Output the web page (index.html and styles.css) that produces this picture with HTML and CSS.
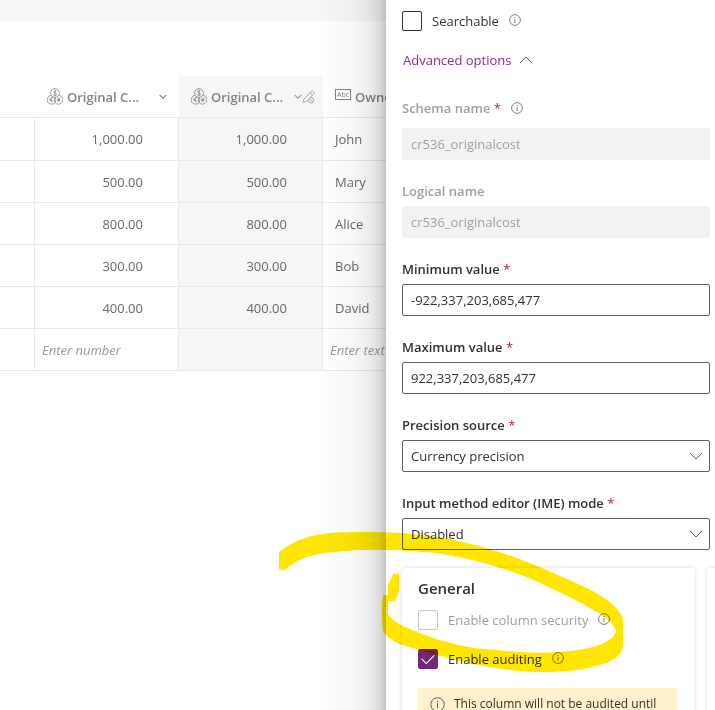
FILE: index.html
```html
<!DOCTYPE html>
<html lang="en">
<head>
<meta charset="utf-8">
<title>Edit column</title>
<link rel="stylesheet" href="styles.css">
</head>
<body>
<svg class="symbols" aria-hidden="true">
  <symbol id="info" viewBox="0 0 12 12"><circle cx="6" cy="6" r="5.4"/><path d="M6 5v4M6 3v1"/></symbol>
  <symbol id="down" viewBox="0 0 14 8"><path d="M1 1l6 6 6-6"/></symbol>
  <symbol id="up" viewBox="0 0 14 8"><path d="M1 7l6-6 6 6"/></symbol>
  <symbol id="currency" viewBox="0 0 16 17">
    <circle cx="8" cy="5" r="4.4"/>
    <path d="M3.8 7.4A4.4 4.4 0 1 0 8 14.4A4.4 4.4 0 1 0 12.2 7.4M8 9.4a4.4 4.4 0 0 1 0 5M8 9.4a4.4 4.4 0 0 0 0 5"/>
    <path d="M9.7 3.3C9 2.6 6.7 2.5 6.7 3.8S9.6 5 9.6 6.3 7 7.500 6.300 6.600M8 1.800v6.400"/>
    <path d="M6 9.800C4.500 9 3.200 10 3.200 11.500S4.700 14 6 13.200M2.400 11h2.800M2.400 12.300h2.600"/>
    <path d="M10.300 9.500l1.500 2 1.500-2M11.800 11.500v2.500M10.200 11.500h3.200M10.200 12.800h3.200"/>
  </symbol>
</svg>
<div class="app">
  <main class="grid-view">
    <div class="toolbar"></div>
    <table class="data">
      <colgroup><col class="col-lead"><col class="col-number"><col class="col-number selected"><col class="col-text"></colgroup>
      <thead>
        <tr>
          <th></th>
          <th><div class="head"><svg class="currency"><use href="#currency"/></svg><span class="title">Original C...</span><svg class="caret"><use href="#down"/></svg></div></th>
          <th><div class="head"><svg class="currency"><use href="#currency"/></svg><span class="title">Original C...</span><span class="tools"><svg class="caret"><use href="#down"/></svg><svg class="pencil" viewBox="0 0 13 14"><path d="M1 12.500L2 9 9 1.600Q10.500.500 11.700 1.700T11.500 4.200L8.500 7.200M1 12.500l3.500-1L6 10M8 2.700l2.500 2.500"/><circle cx="9" cy="10.300" r="2.700"/><path d="M7.200 8.500l3.600 3.600"/></svg></span></div></th>
          <th><div class="head"><span class="abc">Abc</span><span class="title">Owner</span></div></th>
        </tr>
      </thead>
      <tbody>
        <tr><td></td><td class="num">1,000.00</td><td class="num">1,000.00</td><td class="name">John</td></tr>
        <tr><td></td><td class="num">500.00</td><td class="num">500.00</td><td class="name">Mary</td></tr>
        <tr><td></td><td class="num">800.00</td><td class="num">800.00</td><td class="name">Alice</td></tr>
        <tr><td></td><td class="num">300.00</td><td class="num">300.00</td><td class="name">Bob</td></tr>
        <tr><td></td><td class="num">400.00</td><td class="num">400.00</td><td class="name">David</td></tr>
        <tr class="entry"><td></td><td>Enter number</td><td></td><td>Enter text</td></tr>
      </tbody>
    </table>
  </main>
  <aside class="panel">
    <div class="check">
      <input type="checkbox" id="searchable"><label for="searchable">Searchable</label><svg class="info"><use href="#info"/></svg>
    </div>
    <button class="advanced" type="button">Advanced options<svg class="chevron"><use href="#up"/></svg></button>
    <div class="field disabled">
      <div class="label-row with-info"><label for="schema">Schema name <b>*</b></label><svg class="info"><use href="#info"/></svg></div>
      <input type="text" id="schema" value="cr536_originalcost" disabled>
    </div>
    <div class="field disabled">
      <div class="label-row"><label for="logical">Logical name</label></div>
      <input type="text" id="logical" value="cr536_originalcost" disabled>
    </div>
    <div class="field">
      <div class="label-row"><label for="min">Minimum value <b>*</b></label></div>
      <input type="text" id="min" value="-922,337,203,685,477">
    </div>
    <div class="field">
      <div class="label-row"><label for="max">Maximum value <b>*</b></label></div>
      <input type="text" id="max" value="922,337,203,685,477">
    </div>
    <div class="field">
      <div class="label-row"><label for="precision">Precision source <b>*</b></label></div>
      <div class="select"><select id="precision"><option>Currency precision</option></select><svg class="chevron"><use href="#down"/></svg></div>
    </div>
    <div class="field">
      <div class="label-row"><label for="ime">Input method editor (IME) mode <b>*</b></label></div>
      <div class="select"><select id="ime"><option>Disabled</option></select><svg class="chevron"><use href="#down"/></svg></div>
    </div>
    <div class="cards">
      <section class="card">
        <h2>General</h2>
        <div class="check"><input type="checkbox" id="security" disabled><label for="security">Enable column security</label><svg class="info"><use href="#info"/></svg></div>
        <div class="check"><input type="checkbox" id="audit" checked><label for="audit">Enable auditing</label><svg class="info"><use href="#info"/></svg></div>
        <div class="notice"><svg class="info"><use href="#info"/></svg><span>This column will not be audited until</span></div>
      </section>
      <section class="card"></section>
    </div>
  </aside>
  <svg class="marker" viewBox="0 0 436 180" aria-hidden="true">
    <path fill-rule="evenodd" d="M0 22C25 2 53 2 88 2C124 2 153 5 184 12C218 20 250 32 272 42C299 54 322 63 334 75C341 81 344 86 344 91V114C344 123 338 129 327 133C307 140 286 142 264 142C245 142 228 140 205 136C174 130 147 122 120 114Q107 107 104 101Q102 83 104 65H109V55L114 44H120V61L116 71H109V83C113 92 124 96 138 102C163 112 190 119 218 120C245 123 272 124 299 120C320 117 333 111 337 102C336 95 329 89 321 84C304 73 280 62 261 53C244 45 231 41 218 37C193 29 165 23 144 22C116 19 78 19 56 22C32 24 20 28 6 40H0Z"/>
  </svg>
</div>
</body>
</html>
```

FILE: styles.css
```css
* { box-sizing: border-box; }
body {
  margin: 0;
  background: #fff;
  color: #323130;
  font-family: "Open Sans", "Noto Sans", sans-serif;
  font-size: 13px;
  line-height: 20px;
}
svg { display: block; flex: none; fill: none; stroke: currentColor; stroke-width: 1; }
.symbols { position: absolute; width: 0; height: 0; }
.app {
  position: relative;
  display: grid;
  grid-template-columns: minmax(0, 1fr) 329px;
  height: 100vh;
  overflow: hidden;
}

/* Data grid */
.grid-view { position: relative; overflow: hidden; color: #686868; }
.grid-view::after {
  content: "";
  position: absolute;
  inset: 0 0 0 auto;
  width: 66px;
  background: linear-gradient(to right, rgba(0,0,0,0), rgba(0,0,0,.03) 50%, rgba(0,0,0,.08) 76%, rgba(0,0,0,.14) 90%, rgba(0,0,0,.23));
}
.toolbar { height: 20px; margin-bottom: 56px; background: #f6f6f6; box-shadow: 0 1px 2px #f6f6f6; }
.data { width: 467px; table-layout: fixed; border-collapse: separate; border-spacing: 0; }
.col-lead { width: 35px; }
.col-number { width: 144px; }
.selected { background: #f6f6f6; }
.data th { height: 42px; padding: 0 8px 0 12px; border-bottom: 1px solid #e8e8e8; font-weight: 600; text-align: left; color: #838383; }
.data td { height: 42px; padding: 0 7px; border-right: 1px solid #e8e8e8; border-bottom: 1px solid #e8e8e8; }
.data tbody tr:first-child td { height: 43px; }
.data .num { padding-right: 35px; text-align: right; }
.data .name { padding-left: 12px; }
.data .entry { font-style: italic; color: #999; }
.head { display: flex; align-items: center; white-space: nowrap; }
.head .title { margin-left: 4px; }
.currency { width: 16px; height: 17px; stroke-width: .8; }
.caret { width: 8px; height: 5px; margin-left: auto; margin-right: 4px; stroke-width: 2; }
.tools { display: flex; align-items: center; margin-left: auto; color: #a0a0a0; }
.tools .caret { margin: 0; }
.pencil { width: 13px; height: 14px; stroke-width: .9; }
.abc { border: 1px solid #838383; padding: 0 1px; margin-bottom: 4px; font-size: 7px; line-height: 9px; font-weight: 400; }

/* Column settings panel */
.panel { overflow: hidden; padding: 11px 5px 0 16px; background: #fff; }
.check { display: flex; align-items: center; height: 20px; }
.check label { margin-left: 10px; }
.check input {
  appearance: none;
  flex: none;
  width: 20px;
  height: 20px;
  margin: 0;
  border: 1px solid #323130;
  border-radius: 2px;
  background: #fff;
}
.check input:disabled { border-color: #c8c6c4; }
.check input:disabled + label { color: #a19f9d; }
.check input:checked { display: grid; place-items: center; border-color: #742774; background: #742774; }
.check input:checked::before {
  content: "";
  width: 11px;
  height: 6px;
  margin-bottom: 4px;
  border: solid #fff;
  border-width: 0 0 1px 1px;
  transform: rotate(-45deg);
}
.info { width: 12px; height: 12px; margin-left: 10px; color: #605e5c; stroke-width: .8; }
.check .info { margin-bottom: 2px; }
.chevron { width: 14px; height: 8px; color: #605e5c; }
.advanced {
  display: flex;
  align-items: center;
  gap: 8px;
  margin: 19px 0 28px;
  padding: 0 1px;
  border: 0;
  background: none;
  font: inherit;
  color: #8c2a94;
}
.field { margin-bottom: 21px; }
.label-row { display: flex; align-items: center; height: 20px; margin-bottom: 5px; font-weight: 600; }
.label-row.with-info { margin-bottom: 10px; }
.label-row b { color: #a4262c; font-weight: 400; }
.disabled label { color: #a19f9d; }
.field input, .field select {
  appearance: none;
  display: block;
  width: 100%;
  height: 32px;
  margin: 0;
  padding: 0 8px;
  border: 1px solid #605e5c;
  border-radius: 2px;
  background: #fff;
  color: #323130;
  font: inherit;
}
.field input:disabled { border-color: #f3f2f1; background: #f3f2f1; color: #a19f9d; }
.select { position: relative; }
.select .chevron { position: absolute; top: 12px; right: 7px; pointer-events: none; }
.cards { display: flex; gap: 12px; margin-top: -3px; }
.card { flex: 0 0 95%; padding: 10px 18px 16px 16px; border-radius: 4px; box-shadow: 0 0 4px rgba(0,0,0,.15); }
.card h2 { margin: 0 0 12px; font-size: 15px; line-height: 20px; font-weight: 600; }
.card .check { margin-bottom: 19px; }
.notice { display: flex; align-items: center; height: 48px; padding: 0 12px 16px; background: #fff1cc; font-size: 12px; white-space: nowrap; }
.notice .info { width: 15px; height: 15px; margin: 0 9px 0 0; }

/* Highlighter stroke */
.marker {
  position: absolute;
  top: 530px;
  right: 0;
  width: 436px;
  height: 180px;
  fill: #ffe600;
  stroke: none;
  mix-blend-mode: multiply;
  pointer-events: none;
}
```
